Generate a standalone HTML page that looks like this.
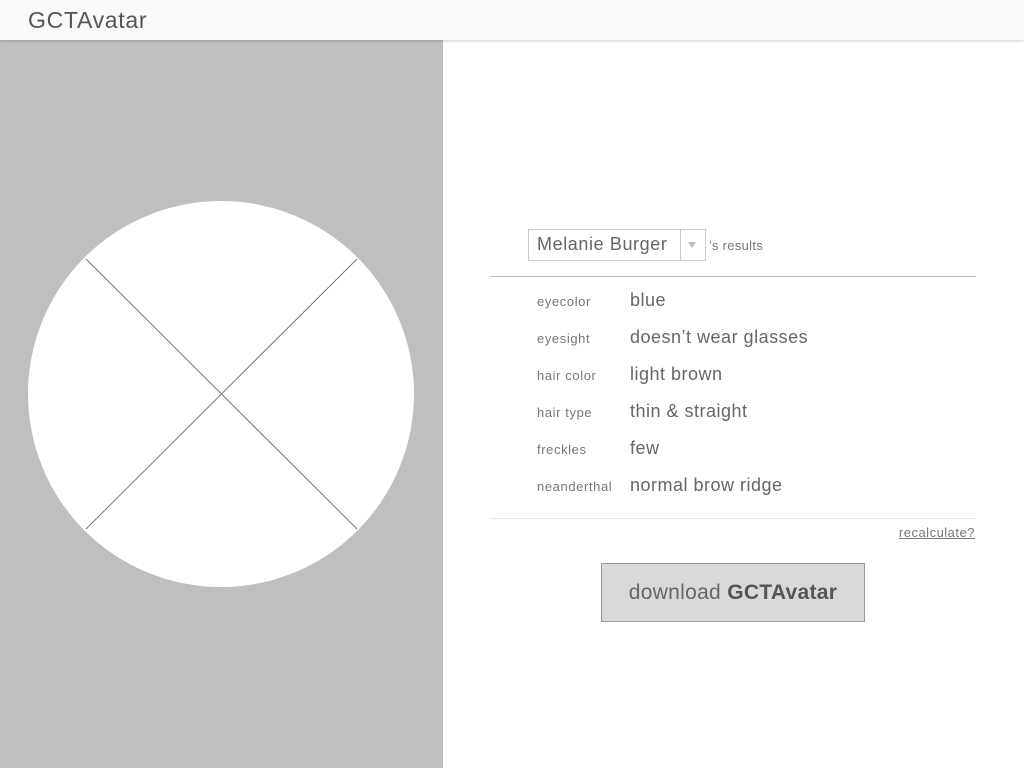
<!DOCTYPE html>
<html><head><meta charset="utf-8"><style>
body{margin:0;width:1024px;height:768px;overflow:hidden;background:#fff;font-family:"Liberation Sans",sans-serif;color:#666;position:relative}
.hdr{position:absolute;left:0;top:0;width:1024px;height:40px;background:#f9f9f9;box-shadow:0 1px 3px rgba(0,0,0,.2);z-index:2}
.hdr span{position:absolute;left:28px;top:7px;font-size:23px;color:#555;letter-spacing:0.7px}
.left{position:absolute;left:0;top:40px;width:443px;height:728px;background:#bfbfbf}
.a{position:absolute;font-size:18px;color:#666;letter-spacing:0.6px}
.l{position:absolute;font-size:13px;color:#777;left:537px;letter-spacing:0.6px}
.v{position:absolute;font-size:18px;color:#666;left:630px;letter-spacing:0.5px}
</style></head><body>
<div class="hdr"><span>GCTAvatar</span></div>
<div class="left"></div>
<svg style="position:absolute;left:0;top:0" width="443" height="768">
<circle cx="221" cy="394" r="193" fill="#fff"/>
<line x1="86" y1="259" x2="357" y2="529" stroke="#777" stroke-width="1"/>
<line x1="357" y1="259" x2="86" y2="529" stroke="#777" stroke-width="1"/>
</svg>
<div style="position:absolute;left:528px;top:229px;width:176px;height:30px;border:1px solid #ccc;background:#fff"></div>
<div style="position:absolute;left:680px;top:230px;width:1px;height:30px;background:#ccc"></div>
<div class="a" style="left:537px;top:234px">Melanie Burger</div>
<div style="position:absolute;left:688px;top:242px;width:0;height:0;border-left:4px solid transparent;border-right:4px solid transparent;border-top:6px solid #bbb"></div>
<div style="position:absolute;left:709px;top:238px;font-size:13px;color:#777;letter-spacing:0.3px">’s results</div>
<div style="position:absolute;left:490px;top:276px;width:486px;height:1px;background:#bbb"></div>
<div class="l" style="top:294px">eyecolor</div><div class="v" style="top:290px">blue</div>
<div class="l" style="top:331px">eyesight</div><div class="v" style="top:327px">doesn’t wear glasses</div>
<div class="l" style="top:368px">hair color</div><div class="v" style="top:364px">light brown</div>
<div class="l" style="top:405px">hair type</div><div class="v" style="top:401px">thin &amp; straight</div>
<div class="l" style="top:442px">freckles</div><div class="v" style="top:438px">few</div>
<div class="l" style="top:479px">neanderthal</div><div class="v" style="top:475px">normal brow ridge</div>
<div style="position:absolute;left:490px;top:518px;width:486px;height:1px;background:#e6e6e6"></div>
<div style="position:absolute;right:49px;top:525px;font-size:13px;color:#777;text-decoration:underline;letter-spacing:0.5px">recalculate?</div>
<div style="position:absolute;left:601px;top:563px;width:262px;height:57px;border:1px solid #999;background:#d9d9d9;text-align:center;line-height:57px;font-size:21px;color:#666;letter-spacing:0.3px">download <b style="color:#555">GCTAvatar</b></div>
</body></html>
